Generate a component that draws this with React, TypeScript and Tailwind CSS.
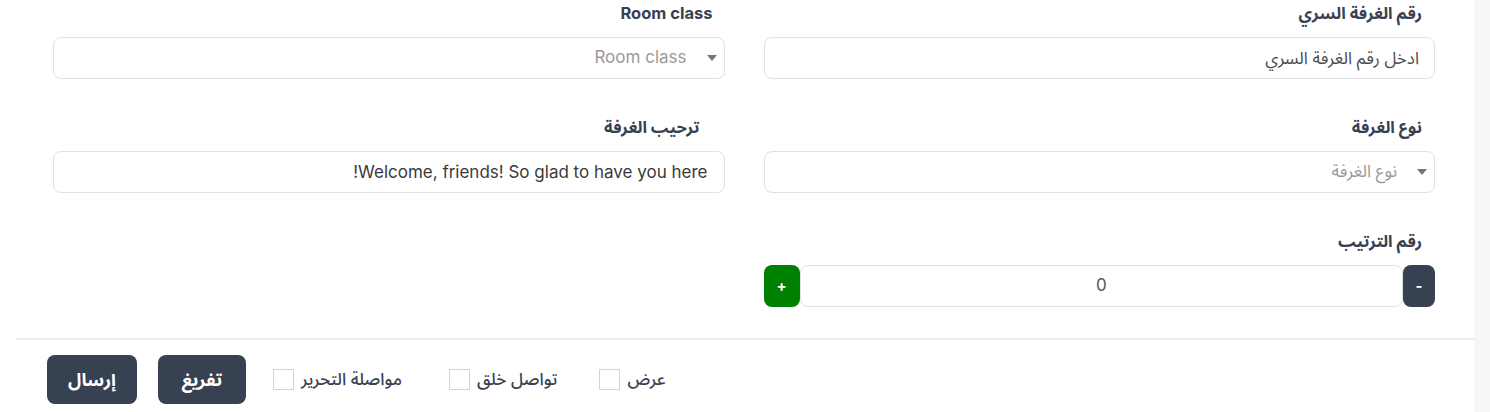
import React from "react";

const font = "font-['Inter','Noto_Sans_Arabic','DejaVu_Sans',sans-serif]";

const Field = ({ label, children, labelClass = "pr-[13px]" }: { label: string; children: React.ReactNode; labelClass?: string }) => (
  <div className="flex flex-col">
    <label className={`mt-[1px] mb-[12px] h-6 leading-6 text-[16.5px] font-bold text-[#374151] ${labelClass}`}>{label}</label>
    {children}
  </div>
);

const Select = ({ placeholder }: { placeholder: string }) => (
  <div className="flex h-[42px] items-center rounded-lg border border-[#dfe1e6] bg-white pr-[7px]">
    <svg width="10" height="7" viewBox="0 0 10 7" className="ml-[20px]">
      <path d="M0 0h10L5 6z" fill="#777" />
    </svg>
    <span className="text-[17px] text-[#9a9a9a]">{placeholder}</span>
  </div>
);

const Check = ({ label, className }: { label: string; className: string }) => (
  <div className={`flex items-center gap-[7px] ${className}`}>
    <span className="h-[21px] w-[21px] border border-[#d4d4d4] bg-white" />
    <span className="text-[17px] font-medium text-[#374151]">{label}</span>
  </div>
);

export default function App() {
  return (
    <div dir="rtl" className={`flex h-[412px] w-[1490px] bg-white ${font}`}>
      <div className="w-4 bg-[#f6f6f6]" />
      <div className="flex flex-1 flex-col pl-4">
        <div className="grid grid-cols-2 gap-x-[39px] gap-y-[35px] pr-[39px] pl-[37px]">
          <Field label="رقم الغرفة السري">
            <input
              className="h-[42px] rounded-lg border border-[#dfe1e6] px-[15px] text-[17px] text-[#4b4b4b] outline-none placeholder:text-[#4b4b4b]"
              placeholder="ادخل رقم الغرفة السري"
            />
          </Field>
          <Field label="Room class" labelClass="pr-[12px]">
            <Select placeholder="Room class" />
          </Field>
          <Field label="نوع الغرفة">
            <Select placeholder="نوع الغرفة" />
          </Field>
          <Field label="ترحيب الغرفة" labelClass="pr-[25px]">
            <input
              className="h-[42px] rounded-lg border border-[#dfe1e6] px-[16px] text-[17px] text-[#3a3a3a] outline-none"
              defaultValue="Welcome, friends! So glad to have you here!"
            />
          </Field>
          <Field label="رقم الترتيب">
            <div className="flex h-[42px] items-stretch">
              <button className="w-[32px] rounded-lg bg-[#374151] text-[15px] font-bold text-white">-</button>
              <div className="flex flex-1 items-center justify-center rounded-lg border border-[#dfe1e6] text-[17px] text-[#555]">0</div>
              <button className="w-[36px] rounded-lg bg-[#008000] text-[15px] font-bold text-white">+</button>
            </div>
          </Field>
        </div>
        <div className="mt-[31px] h-[2px] bg-[#ececec]" />
        <div dir="ltr" className="flex items-center pt-[15px] pl-[31px]">
          <button className="h-[49px] w-[90px] rounded-lg bg-[#374151] text-[18px] font-bold text-white">إرسال</button>
          <button className="ml-[21px] h-[49px] w-[88px] rounded-lg bg-[#374151] text-[18px] font-bold text-white">تفريغ</button>
          <Check label="مواصلة التحرير" className="ml-[27px]" />
          <Check label="تواصل خلق" className="ml-[47px]" />
          <Check label="عرض" className="ml-[42px]" />
        </div>
      </div>
    </div>
  );
}
